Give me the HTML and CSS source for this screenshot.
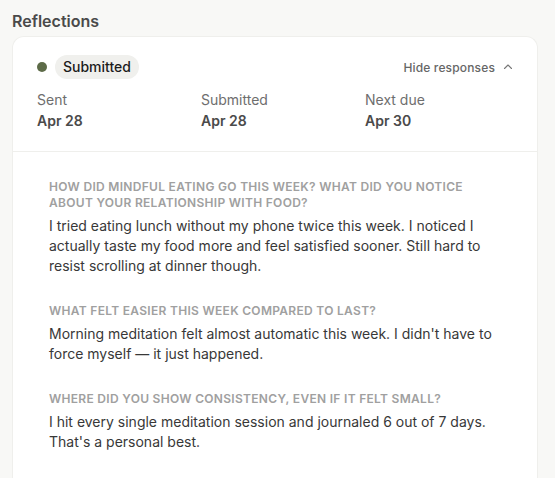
FILE: index.html
```html
<!DOCTYPE html>
<html lang="en">
<head>
    <meta charset="UTF-8">
    <meta name="viewport" content="width=device-width, initial-scale=1.0">
    <title>Reflections</title>
    <link rel="stylesheet" href="styles.css">
</head>
<body>
    <div class="page">
        <h2 class="section-title">Reflections</h2>

        <div class="card">
            <div class="card-head">
                <div class="status-row">
                    <div class="status">
                        <span class="dot"></span>
                        <span class="pill">Submitted</span>
                    </div>
                    <button class="toggle">
                        Hide responses
                        <svg width="10" height="10" viewBox="0 0 10 10" fill="none">
                            <path d="M1.5 6.5L5 3l3.5 3.5" stroke="#777" stroke-width="1.1" stroke-linecap="round" stroke-linejoin="round"/>
                        </svg>
                    </button>
                </div>
                <div class="meta">
                    <div class="meta-item">
                        <span class="meta-label">Sent</span>
                        <span class="meta-value">Apr 28</span>
                    </div>
                    <div class="meta-item">
                        <span class="meta-label">Submitted</span>
                        <span class="meta-value">Apr 28</span>
                    </div>
                    <div class="meta-item">
                        <span class="meta-label">Next due</span>
                        <span class="meta-value">Apr 30</span>
                    </div>
                </div>
            </div>

            <div class="responses">
                <div class="response">
                    <p class="question">How did mindful eating go this week? What did you notice about your relationship with food?</p>
                    <p class="answer">I tried eating lunch without my phone twice this week. I noticed I actually taste my food more and feel satisfied sooner. Still hard to resist scrolling at dinner though.</p>
                </div>
                <div class="response">
                    <p class="question">What felt easier this week compared to last?</p>
                    <p class="answer">Morning meditation felt almost automatic this week. I didn't have to force myself — it just happened.</p>
                </div>
                <div class="response">
                    <p class="question">Where did you show consistency, even if it felt small?</p>
                    <p class="answer">I hit every single meditation session and journaled 6 out of 7 days. That's a personal best.</p>
                </div>
            </div>
        </div>
    </div>
</body>
</html>
```

FILE: styles.css
```css
body {
    margin: 0;
    font-family: Inter, "Noto Sans", sans-serif;
    background: #f8f8f6;
    color: #333;
    overflow: hidden;
}
.page {
    height: 100vh;
    box-sizing: border-box;
    padding: 9px 17px 0 12px;
    display: flex;
    flex-direction: column;
}
.section-title {
    margin: 0 0 3px;
    font-size: 16px;
    line-height: 24px;
    font-weight: 600;
    color: #4a4a4a;
}
.card {
    flex: 1;
    background: #fff;
    border: 1px solid #efefec;
    border-bottom: none;
    border-radius: 12px 12px 0 0;
    overflow: hidden;
}
.card-head {
    padding: 18px 24px 20px;
    border-bottom: 1px solid #efefec;
}
.status-row {
    display: flex;
    justify-content: space-between;
    align-items: center;
}
.status {
    display: flex;
    align-items: center;
    gap: 8px;
}
.dot {
    width: 10px;
    height: 10px;
    border-radius: 50%;
    background: #5d6b48;
}
.pill {
    background: #f0f0ed;
    border-radius: 12px;
    padding: 0 8px;
    font-size: 14px;
    line-height: 24px;
    font-weight: 500;
    color: #1c1c1c;
}
.toggle {
    display: flex;
    align-items: center;
    gap: 8px;
    background: none;
    border: none;
    padding: 0;
    font-family: inherit;
    font-size: 12px;
    font-weight: 500;
    letter-spacing: 0.15px;
    color: #666;
    cursor: pointer;
}
.meta {
    display: grid;
    grid-template-columns: repeat(3, 1fr);
    gap: 16px;
    margin-top: 11px;
}
.meta-item {
    display: flex;
    flex-direction: column;
}
.meta-label {
    font-size: 14px;
    line-height: 20px;
    color: #6e6e6e;
}
.meta-value {
    font-size: 14px;
    line-height: 21px;
    font-weight: 600;
    color: #4a4a4a;
}
.responses {
    padding: 27px 36px;
    display: flex;
    flex-direction: column;
    gap: 27px;
}
.question {
    margin: 0 0 5px;
    font-size: 12px;
    line-height: 16px;
    font-weight: 600;
    text-transform: uppercase;
    letter-spacing: 0.3px;
    color: #a0a0a0;
}
.answer {
    margin: 0;
    font-size: 14px;
    line-height: 20px;
    color: #383838;
}
```
